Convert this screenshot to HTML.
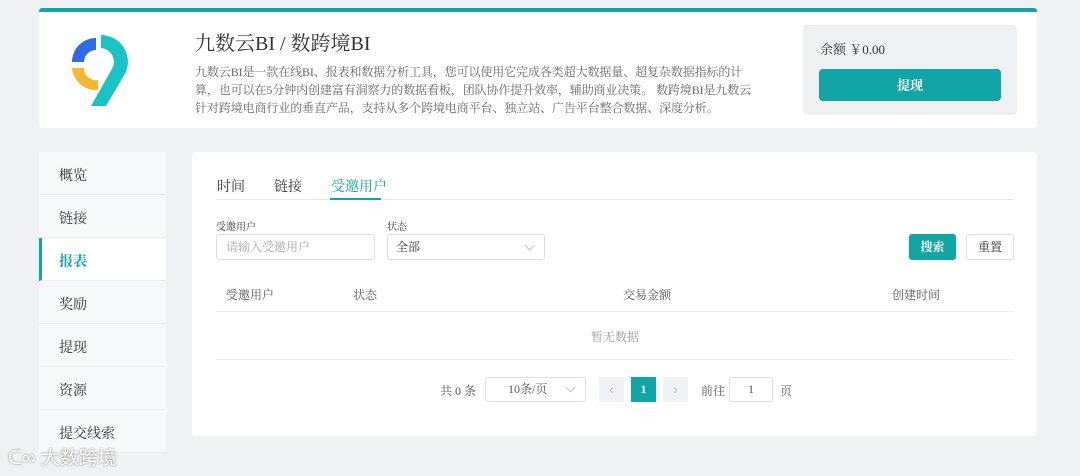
<!DOCTYPE html>
<html><head><meta charset="utf-8"><style>
*{margin:0;padding:0;box-sizing:border-box}
body{width:1080px;height:476px;background:#f0f1f3;position:relative;overflow:hidden;font-family:"Liberation Serif","Noto Serif CJK SC",serif;color:#333}
.a{position:absolute}
.card{background:#fff;border-radius:3px}
.side div{height:43px;border-bottom:1px solid #eceef0;padding-left:20px;padding-top:3px;line-height:43px;font-size:14px;color:#333;background:#f7f8f9}
.inp{position:absolute;border:1px solid #dcdfe6;border-radius:3px;background:#fff;font-size:12px}
.th{position:absolute;top:286px;font-size:12px;color:#555}
.chev{position:absolute;right:11px;top:7px;width:7px;height:7px;border-right:1px solid #c0c4cc;border-bottom:1px solid #c0c4cc;transform:rotate(45deg)}
</style></head><body>
<div class="a card" style="left:39px;top:8px;width:998px;height:120px;border-top:4px solid #12a5a5"></div>
<svg class="a" style="left:68px;top:30px" width="64" height="80" viewBox="0 0 64 80">
<path d="M4 32 A24 24 0 0 1 28 8 L28 20 A12 12 0 0 0 16 32 Z" fill="#2f6be6"/>
<path d="M4 38 L16 38 A12 12 0 0 0 30 50 L30 60 A24 24 0 0 1 4 38 Z" fill="#f7b733"/>
<path d="M33 5 A27 27 0 0 1 58 42 L38 76 L23 76 L45 37 A14 14 0 0 0 33 18 Z" fill="#1ac3c3"/>
</svg>
<div class="a" style="left:195px;top:27px;font-size:20px;color:#333">九数云BI / 数跨境BI</div>
<div class="a" style="left:195px;top:63px;white-space:nowrap;font-size:12px;letter-spacing:-0.1px;line-height:18px;color:#666">九数云BI是一款在线BI、报表和数据分析工具，您可以使用它完成各类超大数据量、超复杂数据指标的计<br>算，也可以在5分钟内创建富有洞察力的数据看板，团队协作提升效率，辅助商业决策。 数跨境BI是九数云<br>针对跨境电商行业的垂直产品，支持从多个跨境电商平台、独立站、广告平台整合数据、深度分析。</div>
<div class="a" style="left:803px;top:25px;width:214px;height:90px;background:#eff0f1;border-radius:4px"></div>
<div class="a" style="left:820px;top:39px;font-size:13px;color:#333">余额 ￥0.00</div>
<div class="a" style="left:819px;top:69px;width:182px;height:32px;background:#12a5a5;border-radius:4px;color:#fff;font-size:13px;font-weight:bold;text-align:center;line-height:34px">提现</div>

<div class="a side" style="left:39px;top:152px;width:127px">
<div>概览</div><div>链接</div><div style="background:#fff;color:#12a5a5;border-left:3px solid #12a5a5;padding-left:17px;font-weight:bold">报表</div><div>奖励</div><div>提现</div><div>资源</div><div>提交线索</div>
</div>
<div class="a" style="left:8px;top:443px;font-size:19px;color:#fff;font-family:'Liberation Sans','Noto Sans CJK SC',sans-serif;text-shadow:0 0 2px #777">ᑕ∞ 大数跨境</div>

<div class="a card" style="left:192px;top:152px;width:845px;height:284px"></div>
<div class="a" style="left:217px;top:176px;font-size:14px">时间</div>
<div class="a" style="left:274px;top:176px;font-size:14px">链接</div>
<div class="a" style="left:331px;top:176px;font-size:14px;color:#12a5a5">受邀用户</div>
<div class="a" style="left:216px;top:199px;width:798px;height:1px;background:#e4e7ed"></div>
<div class="a" style="left:330px;top:198px;width:51px;height:2px;background:#12a5a5"></div>
<div class="a" style="left:216px;top:218px;font-size:10px">受邀用户</div>
<div class="a" style="left:387px;top:218px;font-size:10px">状态</div>
<div class="inp" style="left:216px;top:234px;width:159px;height:26px;line-height:25px;padding-left:9px;color:#aaa">请输入受邀用户</div>
<div class="inp" style="left:387px;top:234px;width:158px;height:26px;line-height:25px;padding-left:8px;color:#333">全部<span class="chev"></span></div>
<div class="a" style="left:909px;top:234px;width:47px;height:26px;background:#12a5a5;border-radius:3px;color:#fff;font-size:12px;font-weight:bold;text-align:center;line-height:26px">搜索</div>
<div class="inp" style="left:966px;top:234px;width:48px;height:26px;line-height:24px;text-align:center;color:#333">重置</div>
<div class="th" style="left:226px">受邀用户</div>
<div class="th" style="left:353px">状态</div>
<div class="th" style="left:623px">交易金额</div>
<div class="th" style="left:892px">创建时间</div>
<div class="a" style="left:216px;top:311px;width:798px;height:1px;background:#ebeef5"></div>
<div class="a" style="left:216px;top:328px;width:798px;text-align:center;font-size:12px;color:#999">暂无数据</div>
<div class="a" style="left:216px;top:359px;width:798px;height:1px;background:#ebeef5"></div>
<div class="a" style="left:440px;top:382px;font-size:12px;color:#555">共 0 条</div>
<div class="inp" style="left:485px;top:377px;width:101px;height:25px;line-height:23px;padding-left:22px;color:#555">10条/页<span class="chev" style="top:6px"></span></div>
<div class="a" style="left:599px;top:377px;width:25px;height:25px;background:#f0f2f5;color:#bbb;text-align:center;line-height:24px;font-size:14px;font-family:'Liberation Sans',sans-serif">‹</div>
<div class="a" style="left:631px;top:377px;width:25px;height:25px;background:#12a5a5;color:#fff;text-align:center;line-height:25px;font-size:12px;font-weight:bold">1</div>
<div class="a" style="left:663px;top:377px;width:25px;height:25px;background:#f0f2f5;color:#bbb;text-align:center;line-height:24px;font-size:14px;font-family:'Liberation Sans',sans-serif">›</div>
<div class="a" style="left:701px;top:382px;font-size:12px;color:#555">前往</div>
<div class="inp" style="left:729px;top:377px;width:44px;height:25px;line-height:23px;text-align:center;color:#555">1</div>
<div class="a" style="left:780px;top:382px;font-size:12px;color:#555">页</div>
</body></html>
